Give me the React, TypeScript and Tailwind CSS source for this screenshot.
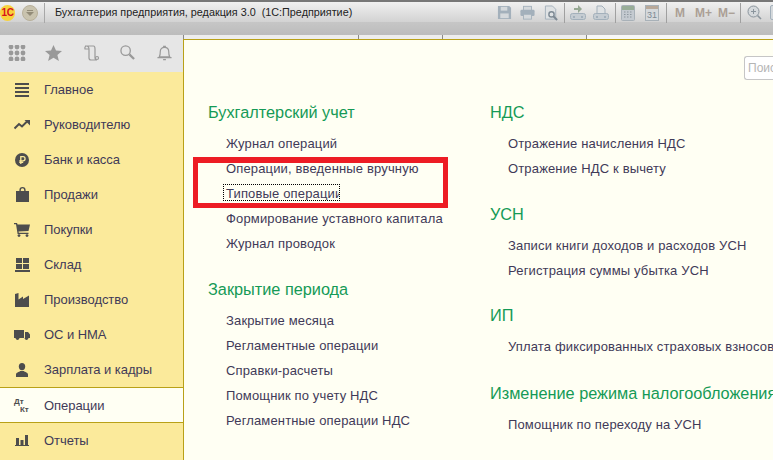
import type { ReactNode } from 'react'

const ico = '#4d4d4d'

const menu: { label: string; icon: ReactNode; active?: boolean }[] = [
  {
    label: 'Главное',
    icon: (
      <svg width="16" height="14" viewBox="0 0 16 14" fill={ico}>
        <rect x="1" y="0" width="14" height="2" />
        <rect x="1" y="4" width="14" height="2" />
        <rect x="1" y="8" width="14" height="2" />
        <rect x="1" y="12" width="14" height="2" />
      </svg>
    ),
  },
  {
    label: 'Руководителю',
    icon: (
      <svg width="16" height="10" viewBox="0 0 16 10">
        <path d="M0.5 8.5 L5 4 L8 6.5 L13 1.5" fill="none" stroke={ico} strokeWidth="2" />
        <path d="M10.5 0 H16 V5.5 Z" fill={ico} />
      </svg>
    ),
  },
  {
    label: 'Банк и касса',
    icon: (
      <svg width="14" height="14" viewBox="0 0 14 14">
        <circle cx="7" cy="7" r="7" fill={ico} />
        <path d="M5.8 11 V3.7 H8 a2 2 0 0 1 0 4.1 H4.3 M4.3 9.4 H8.2" fill="none" stroke="#fbea9b" strokeWidth="1.3" />
      </svg>
    ),
  },
  {
    label: 'Продажи',
    icon: (
      <svg width="13" height="15" viewBox="0 0 13 15" fill={ico}>
        <path d="M0 4 H3.4 V3 a3.1 3 0 0 1 6.2 0 V4 H13 V15 H0 Z M4.8 4 H8.2 V3 a1.7 1.7 0 0 0 -3.4 0 Z" fillRule="evenodd" />
      </svg>
    ),
  },
  {
    label: 'Покупки',
    icon: (
      <svg width="16" height="14" viewBox="0 0 16 14" fill={ico}>
        <path d="M0 0 H3 L3.6 1.5 H16 L14.5 8 L4.5 8.6 L4.8 9.8 H14.5 V11 H3.6 L2 1.2 H0 Z" />
        <circle cx="5" cy="12.6" r="1.4" />
        <circle cx="13" cy="12.6" r="1.4" />
      </svg>
    ),
  },
  {
    label: 'Склад',
    icon: (
      <svg width="15" height="14" viewBox="0 0 15 14" fill={ico}>
        <rect x="1" y="0" width="6" height="5" />
        <rect x="8" y="0" width="6" height="5" />
        <rect x="1" y="6" width="6" height="5" />
        <rect x="8" y="6" width="6" height="5" />
        <rect x="0" y="12" width="15" height="2" />
      </svg>
    ),
  },
  {
    label: 'Производство',
    icon: (
      <svg width="14" height="14" viewBox="0 0 14 14" fill={ico}>
        <path d="M0 14 V1 L3.5 0 V6.5 L8 3.5 V6 L14 2.5 V14 Z" />
      </svg>
    ),
  },
  {
    label: 'ОС и НМА',
    icon: (
      <svg width="16" height="11" viewBox="0 0 16 11" fill={ico}>
        <path d="M0 1 H10 V9 H0 Z M11 3 H14 L16 5.5 V9 H11 Z" />
        <circle cx="3.5" cy="9.3" r="1.7" />
        <circle cx="12.5" cy="9.3" r="1.7" />
      </svg>
    ),
  },
  {
    label: 'Зарплата и кадры',
    icon: (
      <svg width="12" height="14" viewBox="0 0 12 14" fill={ico}>
        <ellipse cx="6" cy="3.6" rx="3.2" ry="3.6" />
        <path d="M0 14 V11.5 C0 9.5 3 9.2 4.2 8 H7.8 C9 9.2 12 9.5 12 11.5 V14 Z" />
      </svg>
    ),
  },
  {
    label: 'Операции',
    active: true,
    icon: (
      <div className="relative h-[16px] w-[16px] text-[8px] leading-[8px] font-bold text-[#4d4d4d]">
        <span className="absolute top-0 left-0">Дт</span>
        <span className="absolute top-[8px] left-[6px]">Кт</span>
      </div>
    ),
  },
  {
    label: 'Отчеты',
    icon: (
      <svg width="14" height="11" viewBox="0 0 14 11" fill={ico}>
        <rect x="1" y="3" width="3" height="7" />
        <rect x="5.5" y="5" width="3" height="5" />
        <rect x="10" y="0" width="3" height="10" />
        <rect x="0" y="10" width="14" height="1" />
      </svg>
    ),
  },
]

const leftColumn = [
  { title: 'Бухгалтерский учет', items: ['Журнал операций', 'Операции, введенные вручную', 'Типовые операции', 'Формирование уставного капитала', 'Журнал проводок'], spacing: 'mb-[21px]' },
  { title: 'Закрытие периода', items: ['Закрытие месяца', 'Регламентные операции', 'Справки-расчеты', 'Помощник по учету НДС', 'Регламентные операции НДС'] },
]

const rightColumn = [
  { title: 'НДС', items: ['Отражение начисления НДС', 'Отражение НДС к вычету'], spacing: 'mb-[21px]' },
  { title: 'УСН', items: ['Записи книги доходов и расходов УСН', 'Регистрация суммы убытка УСН'], spacing: 'mb-[20px]' },
  { title: 'ИП', items: ['Уплата фиксированных страховых взносов'], spacing: 'mb-[22px]' },
  { title: 'Изменение режима налогообложения', items: ['Помощник по переходу на УСН'] },
]

function Section({ title, items, spacing = 'mb-[20px]' }: { title: string; items: string[]; spacing?: string }) {
  return (
    <div className={spacing}>
      <h2 className="h-[25px] text-[16.3px] leading-[25px] font-normal whitespace-nowrap text-[#159a56]">{title}</h2>
      <ul className="mt-[6px] pl-[18px]">
        {items.map((item) => (
          <li key={item} className="flex h-[25px] items-center text-[13px] leading-[25px] tracking-[0.15px] whitespace-nowrap text-[#3f3a58]">
            {item === 'Типовые операции' ? (
              <span className="-mt-[3px] -ml-[3px] h-[17px] w-[117px] overflow-hidden border border-dotted border-black pl-[2px] leading-[18px]">{item}</span>
            ) : (
              item
            )}
          </li>
        ))}
      </ul>
    </div>
  )
}

function ToolSep({ className }: { className: string }) {
  return <div className={`h-[20px] w-px shrink-0 bg-[#a0a0a0] ${className}`} />
}

function Toolbar() {
  const c = '#a3b0bb'
  return (
    <div className="flex w-[276px] shrink-0 items-center overflow-hidden">
      <svg className="shrink-0" width="15" height="15" viewBox="0 0 16 16">
        <path d="M1 1 H13 L15 3 V15 H1 Z" fill={c} />
        <rect x="4" y="2" width="7" height="4" fill="#d5d9dc" />
        <rect x="3.5" y="9" width="9" height="5" fill="#d5d9dc" />
      </svg>
      <svg className="ml-[8px] shrink-0" width="15" height="15" viewBox="0 0 17 16">
        <rect x="4" y="1" width="9" height="5" fill="#d5d9dc" stroke={c} />
        <rect x="0.5" y="5" width="16" height="7" rx="1.5" fill={c} />
        <rect x="4" y="10" width="9" height="5.5" fill="#d5d9dc" stroke={c} />
      </svg>
      <svg className="ml-[9px] shrink-0" width="15" height="16" viewBox="0 0 16 17">
        <path d="M1.5 1 H9 L12.5 4.5 V15 H1.5 Z" fill="#dfe2e4" stroke={c} />
        <circle cx="8" cy="10" r="2.8" fill="none" stroke="#7d8993" strokeWidth="1.5" />
        <path d="M10 12 L14 16" stroke="#7d8993" strokeWidth="2" />
      </svg>
      <ToolSep className="ml-[5px]" />
      <svg className="ml-[5px] shrink-0" width="16" height="15" viewBox="0 0 16 15">
        <path d="M4 3 H8 V0 L12 4 L8 8 V5 H4 Z" fill="#96a893" />
        <rect x="0.5" y="8.5" width="15" height="6" rx="2" fill="#c5ccd2" stroke={c} />
        <rect x="3" y="11" width="2" height="2" fill={c} />
        <rect x="11" y="11" width="2" height="2" fill={c} />
      </svg>
      <svg className="ml-[7px] shrink-0" width="16" height="15" viewBox="0 0 16 15">
        <path d="M4 1 H9 L12 4 V9 H4 Z" fill="#dfe2e4" stroke={c} />
        <rect x="0.5" y="8.5" width="15" height="6" rx="2" fill="#c5ccd2" stroke={c} />
        <rect x="3" y="11" width="2" height="2" fill={c} />
        <rect x="11" y="11" width="2" height="2" fill={c} />
      </svg>
      <ToolSep className="ml-[6px]" />
      <svg className="ml-[5px] shrink-0" width="14" height="16" viewBox="0 0 14 16">
        <rect x="0.5" y="0.5" width="13" height="15" rx="1" fill="#c4cad0" stroke="#a8b1b8" />
        <rect x="1" y="1" width="12" height="4" fill="#98ad98" />
        <path d="M3 7 H11 M3 9.5 H11 M3 12 H11" stroke="#8d969e" strokeDasharray="1.5 1.5" />
      </svg>
      <div className="relative ml-[10px] h-[16px] w-[14px] shrink-0 border border-[#a8b1b8] bg-[#d5d9dc] pt-[3px] text-center text-[9px] leading-[12px] text-[#7d8993]">
        <div className="absolute top-0 left-0 h-[3px] w-full bg-[#b9a99a]" />
        31
      </div>
      <ToolSep className="ml-[7px]" />
      <div className="ml-[8px] flex shrink-0 text-[12px] leading-none font-bold text-[#ab9f95]">
        <span className="w-[10px]">M</span>
        <span className="ml-[10px] w-[17px]">M+</span>
        <span className="ml-[6px] w-[16px]">M−</span>
      </div>
      <ToolSep className="ml-[6px]" />
      <svg className="ml-[6px] shrink-0" width="15" height="15" viewBox="0 0 15 15">
        <circle cx="6.5" cy="6.5" r="5.5" fill="#d5d9dc" stroke="#8a949c" />
        <path d="M4 6.5 H9 M6.5 4 V9" stroke="#8a949c" />
        <path d="M10.5 10.5 L14 14" stroke="#8a949c" strokeWidth="1.6" />
      </svg>
      <div className="ml-[8px] h-[15px] w-[10px] shrink-0 rounded-[2px] border border-[#a3b0bb] bg-[#d5d9dc]" />
    </div>
  )
}

export default function App() {
  return (
    <div className="flex h-[460px] w-[773px] flex-col overflow-hidden bg-[#fffff3] font-['Liberation_Sans',sans-serif]">
      <header className="shrink-0 border-t-2 border-[#777]">
        <div className="flex h-[20px] items-center bg-[linear-gradient(#f0f0f0,#d2d2d2)] pt-[1px]">
          <div className="flex h-[16px] w-[15px] shrink-0 items-center justify-center rounded-full bg-[#f8d23c] text-[10px] leading-none font-bold tracking-[-0.5px] text-[#d8121c]">1С</div>
          <div className="ml-[7px] flex h-[16px] w-[16px] shrink-0 items-center justify-center rounded-full border border-[#b8b09a] bg-[#c9c3ae]">
            <svg width="8" height="6" viewBox="0 0 8 6" fill="#938c78">
              <rect x="1" y="0" width="6" height="1" />
              <path d="M0 2 H8 L4 6 Z" />
            </svg>
          </div>
          <div className="ml-[6px] h-[20px] w-px shrink-0 bg-[#a8a8a8]" />
          <span className="ml-[10px] text-[10.8px] whitespace-pre text-[#222]">Бухгалтерия предприятия, редакция 3.0  (1С:Предприятие)</span>
          <div className="ml-auto">
            <Toolbar />
          </div>
        </div>
        <div className="h-[13px] bg-[linear-gradient(#c6c6c6,#bcbcbc)]" />
      </header>

      <div className="flex min-h-0 flex-1">
        <aside className="relative flex w-[184px] shrink-0 flex-col border-r border-[#b9a118] bg-[#fbea9b]">
          <div className="absolute top-0 right-[-1px] h-[4px] w-px bg-[#888]" />
          <div className="flex h-[37px] shrink-0 items-center bg-[#e6e6e6] pb-[2px] pl-[8px]">
            <svg width="18" height="16" viewBox="0 0 18 16" fill="#999">
              {[2, 8, 14].map((y) => [3, 9, 15].map((x) => <circle key={`${x}-${y}`} cx={x} cy={y} r="2.4" />))}
            </svg>
            <svg className="ml-[19px]" width="17" height="16" viewBox="0 0 17 16" fill="#999">
              <path d="M8.5 0 L11 5.6 L17 6.1 L12.4 10 L13.9 16 L8.5 12.8 L3.1 16 L4.6 10 L0 6.1 L6 5.6 Z" />
            </svg>
            <svg className="ml-[21px]" width="17" height="16" viewBox="0 0 15 16" fill="none" stroke="#999" strokeWidth="1.2">
              <path d="M1 1 H9.5 C11 1 11 3 11 4 V12.5 C11 14 12 15 13 15 H7 C5.5 15 5 14 5 13 V4 C5 2.5 4 1 2.5 1 C1 1 0.7 2.5 1 4 H5" />
              <circle cx="13" cy="13" r="1.5" />
            </svg>
            <svg className="ml-[20px]" width="15" height="15" viewBox="0 0 16 16" fill="none" stroke="#999">
              <circle cx="6" cy="6" r="5" strokeWidth="1.4" />
              <path d="M10 10 L15 15" strokeWidth="2.4" />
            </svg>
            <svg className="ml-[22px]" width="15" height="16" viewBox="0 0 16 16" fill="none" stroke="#999" strokeWidth="1.3">
              <path d="M2.5 12 C3.5 10.5 3.5 9 3.5 6.5 C3.5 3.5 5.5 2 8 2 C10.5 2 12.5 3.5 12.5 6.5 C12.5 9 12.5 10.5 13.5 12 Z" />
              <path d="M0.5 13 H15.5 M6.5 1 H9.5 M6.5 15 H9.5" />
            </svg>
          </div>
          <nav className="flex-1">
            {menu.map((m) => (
              <div
                key={m.label}
                className={`flex items-center text-[13px] tracking-[-0.05px] text-[#3f3a58] ${
                  m.active ? 'h-[36px] border-y border-[#b9a118] bg-[#fffff3] pt-[1px]' : 'h-[35px]'
                }`}
              >
                <div className="flex w-[44px] shrink-0 justify-center">{m.icon}</div>
                <span>{m.label}</span>
              </div>
            ))}
          </nav>
        </aside>

        <main className="relative min-w-0 flex-1">
          <div className="flex h-[5px] border-b border-[#b9a118] bg-[#ededed]">
            <div className="w-[175px] border-r border-[#8a8a8a]" />
            <div className="w-[84px] border-r border-[#8a8a8a]" />
            <div className="w-[144px] border-r border-[#8a8a8a]" />
            <div className="flex-1 bg-[#f7f7f7]" />
          </div>
          <div className="flex items-start justify-end pt-[16px]">
            <div className="h-[24px] w-[29px] overflow-hidden rounded-l-[3px] border-y border-l border-[#c6c6c6] bg-white pl-[3px] text-[12px] leading-[22px] whitespace-nowrap text-[#b5b5b5]">Поиск</div>
          </div>
          <div className="flex pt-[20px] pl-[24px]">
            <div className="w-[282px] shrink-0">
              {leftColumn.map((s) => (
                <Section key={s.title} {...s} />
              ))}
            </div>
            <div className="min-w-0 flex-1">
              {rightColumn.map((s) => (
                <Section key={s.title} {...s} />
              ))}
            </div>
          </div>
          <div className="absolute top-[122px] left-[9px] h-[51px] w-[255px] border-[5px] border-t-[6px] border-[#ed1c24]" />
        </main>
      </div>
    </div>
  )
}
